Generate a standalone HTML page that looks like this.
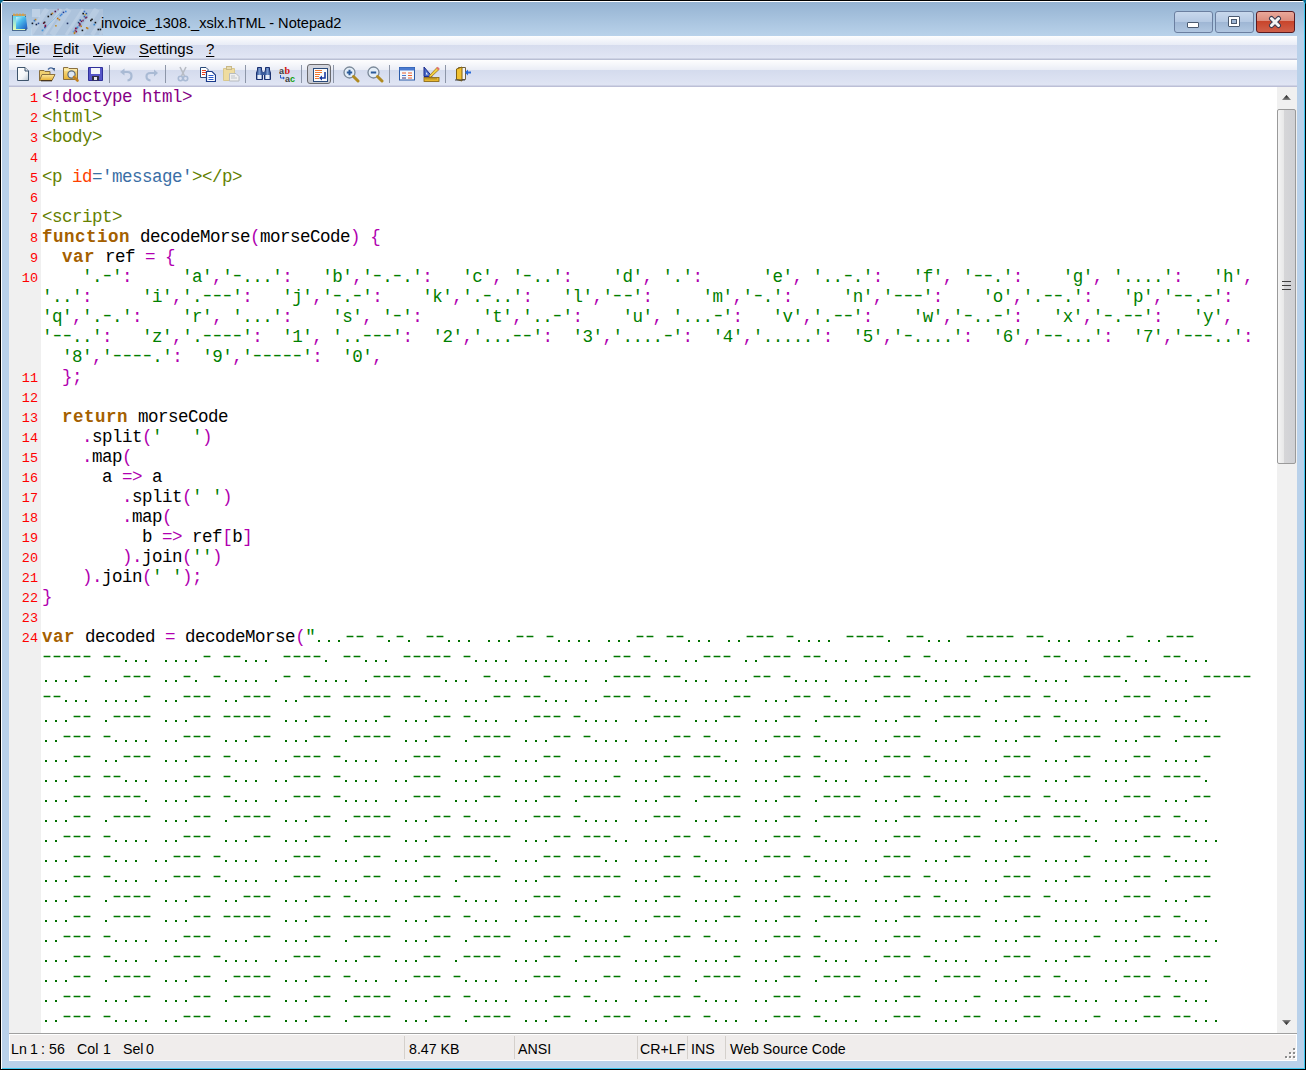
<!DOCTYPE html>
<html><head><meta charset="utf-8">
<style>
html,body{margin:0;padding:0;width:1306px;height:1070px;overflow:hidden;background:#000;}
*{box-sizing:border-box;}
.abs{position:absolute;}
#win{position:absolute;left:0;top:0;width:1306px;height:1070px;background:#000;}
#hl{position:absolute;left:1px;top:1px;width:1304px;height:1068px;background:#fff;}
#hl2{position:absolute;left:2px;top:2px;width:1303px;height:1067px;background:#3ec6ee;}
#frame{position:absolute;left:2px;top:2px;width:1302px;height:1066px;background:#b9d1ea;}
#title{position:absolute;left:2px;top:2px;width:1302px;height:34px;background:linear-gradient(#95b3d2,#b9d2ea);}
#ttext{position:absolute;left:101px;top:15px;font:14.6px "Liberation Sans",sans-serif;color:#000;white-space:nowrap;}
#menu{position:absolute;left:9px;top:36px;width:1288px;height:24px;background:linear-gradient(#fdfdfe 0,#e8ecf6 9px,#d6dcee 9px,#e1e6f4 22px,#b9bfd4 23px,#b9bfd4 24px);}
.mi{position:absolute;top:40px;font:15px "Liberation Sans",sans-serif;color:#000;white-space:nowrap;}
.mi u{text-decoration:underline;text-decoration-thickness:1px;text-underline-offset:1.5px;}
#tool{position:absolute;left:9px;top:60px;width:1288px;height:27px;background:linear-gradient(#fefefe 0,#eaedf6 10px,#d4dbed 10px,#e0e5f4 25px,#bcbfd6 26px,#bcbfd6 27px);}
.sep{position:absolute;top:65px;width:1px;height:18px;background:#8d96a8;}
#edit{position:absolute;left:9px;top:87px;width:1268px;height:946px;background:#fff;overflow:hidden;}
#margin{position:absolute;left:0;top:0;width:32px;height:946px;background:#f0f0f0;}
.r{position:absolute;left:33px;margin-top:0px;height:20px;line-height:20px;letter-spacing:-0.5px;font:17.5px "Liberation Mono",monospace;white-space:pre;color:#000;}
.h{display:inline-block;transform:translateY(-1px) scaleX(1.35);}
.n{position:absolute;left:0;margin-top:4px;width:29px;text-align:right;height:20px;line-height:20px;font:13.5px "Liberation Mono",monospace;color:#f00;}
#vs{position:absolute;left:1277px;top:87px;width:20px;height:946px;background:#f0f0f0;}
#status{position:absolute;left:9px;top:1033px;width:1288px;height:28px;background:#f0edec;border-top:1px solid #a0a0a0;}
.st{position:absolute;top:1041px;font:14.2px "Liberation Sans",sans-serif;color:#000;white-space:nowrap;}
.ss{position:absolute;top:1036px;width:1px;height:23px;background:#d4d0cc;}
</style></head><body>
<div id="win"></div>
<div id="hl"></div>
<div id="hl2"></div>
<div id="frame"></div>
<div id="title"></div>
<div class="abs" style="left:0;top:0;width:4px;height:4px;background:#0b6b8e;clip-path:polygon(0 0,100% 0,0 100%);"></div>
<div class="abs" style="left:1302px;top:0;width:4px;height:4px;background:#0b6b8e;clip-path:polygon(0 0,100% 0,100% 100%);"></div>
<!-- notepad icon -->
<svg class="abs" style="left:11px;top:12px" width="18" height="21" viewBox="0 0 18 21">
<defs><linearGradient id="gnp" x1="0" y1="0" x2="1" y2="1"><stop offset="0" stop-color="#c8f4ff"/><stop offset=".35" stop-color="#50c0ec"/><stop offset=".8" stop-color="#2a78d0"/><stop offset="1" stop-color="#3050a0"/></linearGradient>
<linearGradient id="gnp2" x1="0" y1="0" x2="0" y2="1"><stop offset="0" stop-color="#60d0f0"/><stop offset="1" stop-color="#e8ffb0"/></linearGradient></defs>
<path d="M2 3 H14 L16 17 L15 19 H2 Z" fill="#304870" opacity=".85"/>
<rect x="1.5" y="3.5" width="13" height="15" fill="url(#gnp2)" stroke="#4a6a90" stroke-width="1"/>
<path d="M5 5 H15 L16.5 17 H5 Z" fill="url(#gnp)"/>
<path d="M2 2 H15 V4 H2 Z" fill="#b0a080"/>
<path d="M3 1.5 V4 M6 1.5 V4 M9 1.5 V4 M12 1.5 V4" stroke="#e8a030" stroke-width="1.2"/>
</svg>
<svg class="abs" style="left:31px;top:8px" width="72" height="28" viewBox="31 8 72 28">
<rect x="32" y="9" width="71" height="26" fill="#adc3dc"/>
<rect x="32" y="9" width="8" height="8" fill="#c2d4e8" opacity=".8"/>
<path d="M30 35 L47 9" stroke="#d4e2f0" stroke-width="5" opacity="0.35"/>
<path d="M44 35 L61 9" stroke="#d4e2f0" stroke-width="3" opacity="0.4"/>
<path d="M52 35 L69 9" stroke="#d4e2f0" stroke-width="6" opacity="0.3"/>
<path d="M66 35 L83 9" stroke="#d4e2f0" stroke-width="3" opacity="0.35"/>
<path d="M80 35 L97 9" stroke="#d4e2f0" stroke-width="6" opacity="0.3"/>
<path d="M92 35 L109 9" stroke="#d4e2f0" stroke-width="4" opacity="0.35"/>
<path d="M100 35 L117 9" stroke="#d4e2f0" stroke-width="3" opacity="0.3"/>
<rect x="31.6" y="22.6" width="1.6" height="1.6" fill="#101828"/>
<rect x="33.7" y="19.8" width="1.6" height="1.6" fill="#2a70c8"/>
<rect x="34.7" y="18.8" width="1.6" height="1.6" fill="#c08020"/>
<rect x="35.6" y="23.7" width="1.6" height="1.6" fill="#102048"/>
<rect x="37.7" y="22.6" width="1.6" height="1.6" fill="#2a50a0"/>
<rect x="42.9" y="22.4" width="1.6" height="1.6" fill="#601030"/>
<rect x="43.8" y="21.5" width="1.6" height="1.6" fill="#302020"/>
<rect x="44.6" y="24.7" width="1.6" height="1.6" fill="#801040"/>
<rect x="44.1" y="26.7" width="1.6" height="1.6" fill="#2a60b0"/>
<rect x="44.6" y="25.8" width="1.6" height="1.6" fill="#801040"/>
<rect x="41.7" y="29.6" width="1.6" height="1.6" fill="#2a80d0"/>
<rect x="47.5" y="15.7" width="1.6" height="1.6" fill="#101010"/>
<rect x="50.5" y="13.6" width="1.6" height="1.6" fill="#202020"/>
<rect x="51.6" y="12.6" width="1.6" height="1.6" fill="#c08020"/>
<rect x="54.5" y="10.7" width="1.6" height="1.6" fill="#501050"/>
<rect x="57.4" y="8.7" width="1.6" height="1.6" fill="#a080a0"/>
<rect x="56.9" y="17.7" width="1.6" height="1.6" fill="#c07010"/>
<rect x="58.6" y="18.9" width="1.6" height="1.6" fill="#c08020"/>
<rect x="55.1" y="25.0" width="1.6" height="1.6" fill="#c09030"/>
<rect x="62.7" y="11.6" width="1.6" height="1.6" fill="#203890"/>
<rect x="65.0" y="10.7" width="1.6" height="1.6" fill="#3a80d8"/>
<rect x="60.9" y="13.6" width="1.6" height="1.6" fill="#3a80d8"/>
<rect x="59.7" y="14.7" width="1.6" height="1.6" fill="#3a80d8"/>
<rect x="66.7" y="22.6" width="1.6" height="1.6" fill="#203060"/>
<rect x="82.4" y="12.8" width="1.6" height="1.6" fill="#101010"/>
<rect x="85.6" y="12.8" width="1.6" height="1.6" fill="#2050a0"/>
<rect x="83.6" y="10.7" width="1.6" height="1.6" fill="#3a70c8"/>
<rect x="84.5" y="13.9" width="1.6" height="1.6" fill="#c0a040"/>
<rect x="83.6" y="15.7" width="1.6" height="1.6" fill="#2a60b0"/>
<rect x="84.8" y="17.1" width="1.6" height="1.6" fill="#701040"/>
<rect x="85.7" y="16.5" width="1.6" height="1.6" fill="#701040"/>
<rect x="82.4" y="19.7" width="1.6" height="1.6" fill="#801040"/>
<rect x="79.5" y="19.4" width="1.6" height="1.6" fill="#2050a0"/>
<rect x="80.7" y="20.6" width="1.6" height="1.6" fill="#701040"/>
<rect x="77.8" y="21.8" width="1.6" height="1.6" fill="#204070"/>
<rect x="78.9" y="22.9" width="1.6" height="1.6" fill="#701040"/>
<rect x="79.5" y="23.8" width="1.6" height="1.6" fill="#801040"/>
<rect x="78.7" y="24.7" width="1.6" height="1.6" fill="#701040"/>
<rect x="80.4" y="25.5" width="1.6" height="1.6" fill="#c08020"/>
<rect x="74.9" y="27.6" width="1.6" height="1.6" fill="#801040"/>
<rect x="75.8" y="27.6" width="1.6" height="1.6" fill="#801040"/>
<rect x="74.6" y="29.6" width="1.6" height="1.6" fill="#801040"/>
<rect x="75.5" y="30.8" width="1.6" height="1.6" fill="#801040"/>
<rect x="73.7" y="31.4" width="1.6" height="1.6" fill="#c08020"/>
<rect x="73.7" y="32.5" width="1.6" height="1.6" fill="#c08020"/>
<rect x="81.6" y="29.6" width="1.6" height="1.6" fill="#101010"/>
<rect x="90.0" y="19.7" width="1.6" height="1.6" fill="#101010"/>
<rect x="91.2" y="18.6" width="1.6" height="1.6" fill="#101010"/>
<rect x="94.6" y="21.8" width="1.6" height="1.6" fill="#101010"/>
<rect x="93.5" y="23.8" width="1.6" height="1.6" fill="#2a80d0"/>
<rect x="85.9" y="27.0" width="1.6" height="1.6" fill="#c08020"/>
<rect x="86.8" y="27.6" width="1.6" height="1.6" fill="#c08020"/>
<rect x="97.5" y="28.7" width="1.6" height="1.6" fill="#101010"/>
<rect x="99.6" y="28.7" width="1.6" height="1.6" fill="#101010"/>
<rect x="76.7" y="26.6" width="1.6" height="1.6" fill="#2a80d0"/>
<rect x="72.7" y="30.7" width="1.6" height="1.6" fill="#60a0e0"/>
<path d="M42 31 L60 13" stroke="#60b0e8" stroke-width=".7" opacity=".6"/>
<path d="M75 31 L88 15" stroke="#60b0e8" stroke-width=".7" opacity=".6"/>
</svg>
<div id="ttext">invoice_1308._xslx.hTML - Notepad2</div>
<!-- caption buttons -->
<div class="abs" style="left:1174px;top:11px;width:39px;height:22px;border:1px solid #6b7fa0;border-radius:3px;background:linear-gradient(#c8d8ec 0,#b4c8e2 50%,#9eb6d4 50%,#b0c6e0 100%);"></div>
<div class="abs" style="left:1187px;top:22px;width:12px;height:6px;background:#fff;border:1px solid #4a5a70;border-radius:1px;"></div>
<div class="abs" style="left:1215px;top:11px;width:39px;height:22px;border:1px solid #6b7fa0;border-radius:3px;background:linear-gradient(#c8d8ec 0,#b4c8e2 50%,#9eb6d4 50%,#b0c6e0 100%);"></div>
<div class="abs" style="left:1228px;top:16px;width:12px;height:11px;background:#fff;border:1px solid #4a5a70;border-radius:1px;"></div>
<div class="abs" style="left:1231px;top:19px;width:6px;height:5px;background:#9eb6d4;border:1px solid #4a5a70;"></div>
<div class="abs" style="left:1256px;top:11px;width:39px;height:22px;border:1px solid #5a1a20;border-radius:3px;background:linear-gradient(#eaa89a 0,#dc8c7c 45%,#c8442a 45%,#d0604a 100%);"></div>
<svg class="abs" style="left:1267px;top:15px" width="16" height="14" viewBox="0 0 16 14"><path d="M4.5 3.5 L11.5 10.5 M11.5 3.5 L4.5 10.5" stroke="#3a3a50" stroke-width="5" stroke-linecap="round"/><path d="M4.5 3.5 L11.5 10.5 M11.5 3.5 L4.5 10.5" stroke="#f4f4f4" stroke-width="3" stroke-linecap="round"/></svg>

<div id="menu"></div>
<div class="mi" style="left:16px"><u>F</u>ile</div>
<div class="mi" style="left:53px"><u>E</u>dit</div>
<div class="mi" style="left:93px"><u>V</u>iew</div>
<div class="mi" style="left:139px"><u>S</u>ettings</div>
<div class="mi" style="left:206px"><u>?</u></div>

<div id="tool"></div>
<div class="sep" style="left:109px"></div>
<div class="sep" style="left:165px"></div>
<div class="sep" style="left:245px"></div>
<div class="sep" style="left:301px"></div>
<div class="sep" style="left:333px"></div>
<div class="sep" style="left:389px"></div>
<div class="sep" style="left:445px"></div>
<!-- new -->
<svg class="abs" style="left:15px;top:66px" width="16" height="16" viewBox="0 0 16 16">
<defs><linearGradient id="gpage" x1="0" y1="0" x2="1" y2="1"><stop offset="0" stop-color="#fff"/><stop offset=".6" stop-color="#f4f6f8"/><stop offset="1" stop-color="#b8c4d0"/></linearGradient></defs>
<path d="M2.5 1.5 H10 L13.5 5 V14.5 H2.5 Z" fill="url(#gpage)" stroke="#3e546c" stroke-width="1"/>
<path d="M10 1.5 V5 H13.5" fill="#dfe6ee" stroke="#3e546c" stroke-width="1"/>
</svg>
<!-- open -->
<svg class="abs" style="left:39px;top:66px" width="17" height="16" viewBox="0 0 17 16">
<defs><linearGradient id="gfold" x1="0" y1="0" x2="0" y2="1"><stop offset="0" stop-color="#fde9a0"/><stop offset="1" stop-color="#e8b030"/></linearGradient></defs>
<path d="M0.5 4.5 H5 L6 5.5 H11 V14.5 H0.5 Z" fill="#f0d070" stroke="#8a7040" stroke-width="1"/>
<path d="M3 8.5 H16 L13 14.5 H0.5 Z" fill="url(#gfold)" stroke="#8a7040" stroke-width="1"/>
<path d="M2 14.8 H13" stroke="#302010" stroke-width="1"/>
<path d="M9 3.5 Q11.5 0.5 14.5 3" fill="none" stroke="#4a6a9a" stroke-width="1.3"/>
<path d="M13 2 L16 2 L15.5 5.5 Z" fill="#3a5a8a"/>
</svg>
<!-- browse -->
<svg class="abs" style="left:63px;top:66px" width="17" height="17" viewBox="0 0 17 17">
<path d="M0.5 1.5 H5 L6 2.5 H14.5 V13.5 H0.5 Z" fill="url(#gfold)" stroke="#8a7040" stroke-width="1"/>
<path d="M1 4 H14" stroke="#fff4c0" stroke-width="1"/>
<circle cx="8.5" cy="8.5" r="3.6" fill="#dde8f4" stroke="#5a6a7a" stroke-width="1.2"/>
<path d="M11 11 L14.5 14.5" stroke="#c08020" stroke-width="2.6" stroke-linecap="round"/>
</svg>
<!-- save -->
<svg class="abs" style="left:88px;top:66px" width="15" height="16" viewBox="0 0 15 16">
<path d="M0.5 1.5 H14.5 V14.5 H0.5 Z" fill="#5656c8" stroke="#30309a" stroke-width="1"/>
<rect x="3" y="2" width="9" height="6" fill="#f4f6fa"/>
<rect x="4" y="10" width="7" height="4.5" fill="#303040"/>
<rect x="6" y="11" width="3" height="3" fill="#e8e8f0"/>
</svg>
<!-- undo (disabled) -->
<svg class="abs" style="left:119px;top:68px" width="15" height="14" viewBox="0 0 15 14">
<path d="M4 4 H8.5 Q12.5 4 12.5 8 Q12.5 12 8.5 12.5" fill="none" stroke="#a9bad4" stroke-width="2.2"/>
<path d="M1 4 L5.5 0.5 V7.5 Z" fill="#a9bad4"/>
</svg>
<!-- redo (disabled) -->
<svg class="abs" style="left:144px;top:68px" width="15" height="14" viewBox="0 0 15 14">
<path d="M11 5 H6.5 Q2.5 5 2.5 8.5 Q2.5 12 6.5 12.5" fill="none" stroke="#a9bad4" stroke-width="2.2"/>
<path d="M14 5 L10 1.5 V8.5 Z" fill="#a9bad4"/>
</svg>
<!-- cut (disabled) -->
<svg class="abs" style="left:176px;top:66px" width="14" height="16" viewBox="0 0 14 16">
<path d="M4 1 L8.5 10 M10 1 L5.5 10" stroke="#b8bcc4" stroke-width="1.6"/>
<circle cx="4.5" cy="12.5" r="2.2" fill="none" stroke="#a9bad4" stroke-width="1.6"/>
<circle cx="9.5" cy="12.5" r="2.2" fill="none" stroke="#a9bad4" stroke-width="1.6"/>
</svg>
<!-- copy -->
<svg class="abs" style="left:200px;top:67px" width="16" height="15" viewBox="0 0 16 15">
<path d="M0.5 0.5 H6 L8 2.5 V10.5 H0.5 Z" fill="#fff" stroke="#2a4a7a" stroke-width="1"/>
<path d="M2 3.5 H6 M2 5.5 H6 M2 7.5 H5" stroke="#e84020" stroke-width="1"/>
<path d="M6.5 4.5 H12 L15.5 8 V14.5 H6.5 Z" fill="#fff" stroke="#1a3a8a" stroke-width="1.2"/>
<path d="M8.5 8.5 H13.5 M8.5 10.5 H13.5 M8.5 12.5 H13.5" stroke="#2a5ac8" stroke-width="1"/>
</svg>
<!-- paste (disabled) -->
<svg class="abs" style="left:223px;top:66px" width="17" height="16" viewBox="0 0 17 16">
<path d="M0.5 2.5 H11.5 V14.5 H0.5 Z" fill="#efdca0" stroke="#d8c890" stroke-width="1"/>
<rect x="3.5" y="0.5" width="5" height="3" fill="#e8dcb0" stroke="#c8b888" stroke-width="1"/>
<path d="M6.5 7.5 H13 L16 10.5 V15 H6.5 Z" fill="#f0f0f0" stroke="#b8bcc0" stroke-width="1"/>
<path d="M8 10 H12 M8 12 H14" stroke="#c0c4c8" stroke-width="1"/>
</svg>
<!-- find -->
<svg class="abs" style="left:256px;top:66px" width="16" height="15" viewBox="0 0 16 15">
<defs><linearGradient id="gbin" x1="0" y1="0" x2="1" y2="0"><stop offset="0" stop-color="#2a4a8a"/><stop offset=".5" stop-color="#7a9ad0"/><stop offset="1" stop-color="#2a4a8a"/></linearGradient></defs>
<path d="M1.5 1.5 H5.5 V4 L6.5 7 V13.5 H0.5 V7 L1.5 4 Z" fill="url(#gbin)" stroke="#1a3070" stroke-width="1"/>
<path d="M9.5 1.5 H13.5 V4 L14.5 7 V13.5 H8.5 V7 L9.5 4 Z" fill="url(#gbin)" stroke="#1a3070" stroke-width="1"/>
<rect x="5.5" y="6" width="4" height="3" fill="#3a5a9a"/>
<rect x="1.5" y="9" width="4" height="4" fill="#e8eef8"/>
<rect x="9.5" y="9" width="4" height="4" fill="#e8eef8"/>
</svg>
<!-- replace -->
<svg class="abs" style="left:279px;top:66px" width="17" height="16" viewBox="0 0 17 16">
<text x="0" y="7.5" font-family="Liberation Sans" font-weight="bold" font-size="9" fill="#404040">a</text>
<text x="5.5" y="7.5" font-family="Liberation Serif" font-weight="bold" font-size="10" fill="#d01010">b</text>
<path d="M1.5 9 V12 H4.5" fill="none" stroke="#2a5ac8" stroke-width="1"/>
<path d="M4 10.5 L6 12 L4 13.5 Z" fill="#2a5ac8"/>
<text x="6" y="15.5" font-family="Liberation Sans" font-weight="bold" font-size="9" fill="#404040">a</text>
<text x="11" y="15.5" font-family="Liberation Sans" font-weight="bold" font-size="9" fill="#10a010">c</text>
</svg>
<!-- word wrap pressed -->
<div class="abs" style="left:307px;top:64px;width:24px;height:20px;border:1.5px solid #6a6a6e;border-radius:3px;background:linear-gradient(#d4d6de,#c6c9d2);"></div>
<svg class="abs" style="left:313px;top:68px" width="15" height="14" viewBox="0 0 15 14">
<rect x="0.5" y="0.5" width="14" height="13" fill="#fbfbfc" stroke="#2a4a7a" stroke-width="1"/>
<path d="M2 2.5 H9 M2 4.5 H9 M2 6.5 H7 M2 8.5 H6 M2 10.5 H6" stroke="#f07830" stroke-width="1"/>
<path d="M12 4 V10 H8" fill="none" stroke="#1a3aa0" stroke-width="1.6"/>
<path d="M9 7.5 L6 10 L9 12.5 Z" fill="#1a3aa0"/>
</svg>
<!-- zoom in -->
<svg class="abs" style="left:343px;top:66px" width="17" height="17" viewBox="0 0 17 17">
<circle cx="6.5" cy="6.5" r="5.5" fill="#e4eef8" stroke="#7a8898" stroke-width="1.3"/>
<path d="M3.8 6.5 H9.2 M6.5 3.8 V9.2" stroke="#2a5a9a" stroke-width="2"/>
<path d="M10.5 10.5 L15 15" stroke="#b08a20" stroke-width="3" stroke-linecap="round"/>
</svg>
<!-- zoom out -->
<svg class="abs" style="left:367px;top:66px" width="17" height="17" viewBox="0 0 17 17">
<circle cx="6.5" cy="6.5" r="5.5" fill="#e4eef8" stroke="#7a8898" stroke-width="1.3"/>
<path d="M3.8 6.5 H9.2" stroke="#2a5a9a" stroke-width="2"/>
<path d="M10.5 10.5 L15 15" stroke="#b08a20" stroke-width="3" stroke-linecap="round"/>
</svg>
<!-- scheme -->
<svg class="abs" style="left:399px;top:67px" width="16" height="14" viewBox="0 0 16 14">
<rect x="0.5" y="0.5" width="15" height="12.5" fill="#f4f8fc" stroke="#2a5aa8" stroke-width="1"/>
<rect x="0.5" y="0.5" width="15" height="3" fill="#4a7ad0"/>
<path d="M3 6 H7 M9 6 H13 M3 8.5 H7 M9 8.5 H13 M3 11 H7 M9 11 H13" stroke="#e86030" stroke-width="1"/>
<path d="M3 8.5 H7 M3 11 H7" stroke="#4a7ad0" stroke-width="1"/>
</svg>
<!-- customize -->
<svg class="abs" style="left:423px;top:66px" width="17" height="16" viewBox="0 0 17 16">
<path d="M1 1 L9 10.5 H1 Z" fill="#4a6ac8" stroke="#1a2a8a" stroke-width="1"/>
<path d="M3 6 L5 8.5 H3 Z" fill="#e8eefc"/>
<path d="M14 1.5 L16 3.5 L8 11 L6 11.5 L6.5 9.5 Z" fill="#f0d040" stroke="#a07020" stroke-width="0.8"/>
<path d="M14 1.5 L16 3.5" stroke="#e07070" stroke-width="2"/>
<rect x="1" y="11.5" width="15" height="4" fill="#e8b830" stroke="#806010" stroke-width="0.8"/>
<path d="M3 12 V13.5 M5 12 V13.5 M7 12 V13.5 M9 12 V13.5 M11 12 V13.5 M13 12 V13.5" stroke="#806010" stroke-width="0.8"/>
</svg>
<!-- exit -->
<svg class="abs" style="left:455px;top:66px" width="17" height="16" viewBox="0 0 17 16">
<path d="M3.5 1.5 H10.5 V13.5 H3.5 Z" fill="#f4f4f4" stroke="#706040" stroke-width="1"/>
<path d="M1.5 3 L7 1 V15 L1.5 13.5 Z" fill="#f0c030" stroke="#806010" stroke-width="1"/>
<path d="M0 14 H10" stroke="#404040" stroke-width="1"/>
<path d="M11 6.5 H16" stroke="#2a6ad8" stroke-width="2"/>
<path d="M10 6.5 L13 3.5 V9.5 Z" fill="#2a6ad8"/>
</svg>


<div id="edit"><div id="margin"></div>
<div class="r" style="top:0px"><span style="color:#850085">&lt;!doctype html&gt;</span></div>
<div class="n" style="top:0px">1</div>
<div class="r" style="top:20px"><span style="color:#648000">&lt;html&gt;</span></div>
<div class="n" style="top:20px">2</div>
<div class="r" style="top:40px"><span style="color:#648000">&lt;body&gt;</span></div>
<div class="n" style="top:40px">3</div>
<div class="r" style="top:60px"></div>
<div class="n" style="top:60px">4</div>
<div class="r" style="top:80px"><span style="color:#648000">&lt;p</span> <span style="color:#ff4000">id</span><span style="color:#3a6ea5">=</span><span style="color:#3a6ea5">'message'</span><span style="color:#648000">&gt;&lt;/p&gt;</span></div>
<div class="n" style="top:80px">5</div>
<div class="r" style="top:100px"></div>
<div class="n" style="top:100px">6</div>
<div class="r" style="top:120px"><span style="color:#648000">&lt;script&gt;</span></div>
<div class="n" style="top:120px">7</div>
<div class="r" style="top:140px"><span style="color:#a46000;font-weight:bold;letter-spacing:0.5px">function</span> <span style="color:#000000">decodeMorse</span><span style="color:#b000b0">(</span><span style="color:#000000">morseCode</span><span style="color:#b000b0">)</span> <span style="color:#b000b0">{</span></div>
<div class="n" style="top:140px">8</div>
<div class="r" style="top:160px">  <span style="color:#a46000;font-weight:bold;letter-spacing:0.5px">var</span> <span style="color:#000000">ref</span> <span style="color:#b000b0">=</span> <span style="color:#b000b0">{</span></div>
<div class="n" style="top:160px">9</div>
<div class="r" style="top:180px">    <span style="color:#008000">'.<span class="h">-</span>'</span><span style="color:#b000b0">:</span>     <span style="color:#008000">'a'</span><span style="color:#b000b0">,</span><span style="color:#008000">'<span class="h">-</span>...'</span><span style="color:#b000b0">:</span>   <span style="color:#008000">'b'</span><span style="color:#b000b0">,</span><span style="color:#008000">'<span class="h">-</span>.<span class="h">-</span>.'</span><span style="color:#b000b0">:</span>   <span style="color:#008000">'c'</span><span style="color:#b000b0">,</span> <span style="color:#008000">'<span class="h">-</span>..'</span><span style="color:#b000b0">:</span>    <span style="color:#008000">'d'</span><span style="color:#b000b0">,</span> <span style="color:#008000">'.'</span><span style="color:#b000b0">:</span>      <span style="color:#008000">'e'</span><span style="color:#b000b0">,</span> <span style="color:#008000">'..<span class="h">-</span>.'</span><span style="color:#b000b0">:</span>   <span style="color:#008000">'f'</span><span style="color:#b000b0">,</span> <span style="color:#008000">'<span class="h">-</span><span class="h">-</span>.'</span><span style="color:#b000b0">:</span>    <span style="color:#008000">'g'</span><span style="color:#b000b0">,</span> <span style="color:#008000">'....'</span><span style="color:#b000b0">:</span>   <span style="color:#008000">'h'</span><span style="color:#b000b0">,</span></div>
<div class="n" style="top:180px">10</div>
<div class="r" style="top:200px"><span style="color:#008000">'..'</span><span style="color:#b000b0">:</span>     <span style="color:#008000">'i'</span><span style="color:#b000b0">,</span><span style="color:#008000">'.<span class="h">-</span><span class="h">-</span><span class="h">-</span>'</span><span style="color:#b000b0">:</span>   <span style="color:#008000">'j'</span><span style="color:#b000b0">,</span><span style="color:#008000">'<span class="h">-</span>.<span class="h">-</span>'</span><span style="color:#b000b0">:</span>    <span style="color:#008000">'k'</span><span style="color:#b000b0">,</span><span style="color:#008000">'.<span class="h">-</span>..'</span><span style="color:#b000b0">:</span>   <span style="color:#008000">'l'</span><span style="color:#b000b0">,</span><span style="color:#008000">'<span class="h">-</span><span class="h">-</span>'</span><span style="color:#b000b0">:</span>     <span style="color:#008000">'m'</span><span style="color:#b000b0">,</span><span style="color:#008000">'<span class="h">-</span>.'</span><span style="color:#b000b0">:</span>     <span style="color:#008000">'n'</span><span style="color:#b000b0">,</span><span style="color:#008000">'<span class="h">-</span><span class="h">-</span><span class="h">-</span>'</span><span style="color:#b000b0">:</span>    <span style="color:#008000">'o'</span><span style="color:#b000b0">,</span><span style="color:#008000">'.<span class="h">-</span><span class="h">-</span>.'</span><span style="color:#b000b0">:</span>   <span style="color:#008000">'p'</span><span style="color:#b000b0">,</span><span style="color:#008000">'<span class="h">-</span><span class="h">-</span>.<span class="h">-</span>'</span><span style="color:#b000b0">:</span>   </div>
<div class="r" style="top:220px"><span style="color:#008000">'q'</span><span style="color:#b000b0">,</span><span style="color:#008000">'.<span class="h">-</span>.'</span><span style="color:#b000b0">:</span>    <span style="color:#008000">'r'</span><span style="color:#b000b0">,</span> <span style="color:#008000">'...'</span><span style="color:#b000b0">:</span>    <span style="color:#008000">'s'</span><span style="color:#b000b0">,</span> <span style="color:#008000">'<span class="h">-</span>'</span><span style="color:#b000b0">:</span>      <span style="color:#008000">'t'</span><span style="color:#b000b0">,</span><span style="color:#008000">'..<span class="h">-</span>'</span><span style="color:#b000b0">:</span>    <span style="color:#008000">'u'</span><span style="color:#b000b0">,</span> <span style="color:#008000">'...<span class="h">-</span>'</span><span style="color:#b000b0">:</span>   <span style="color:#008000">'v'</span><span style="color:#b000b0">,</span><span style="color:#008000">'.<span class="h">-</span><span class="h">-</span>'</span><span style="color:#b000b0">:</span>    <span style="color:#008000">'w'</span><span style="color:#b000b0">,</span><span style="color:#008000">'<span class="h">-</span>..<span class="h">-</span>'</span><span style="color:#b000b0">:</span>   <span style="color:#008000">'x'</span><span style="color:#b000b0">,</span><span style="color:#008000">'<span class="h">-</span>.<span class="h">-</span><span class="h">-</span>'</span><span style="color:#b000b0">:</span>   <span style="color:#008000">'y'</span><span style="color:#b000b0">,</span></div>
<div class="r" style="top:240px"><span style="color:#008000">'<span class="h">-</span><span class="h">-</span>..'</span><span style="color:#b000b0">:</span>   <span style="color:#008000">'z'</span><span style="color:#b000b0">,</span><span style="color:#008000">'.<span class="h">-</span><span class="h">-</span><span class="h">-</span><span class="h">-</span>'</span><span style="color:#b000b0">:</span>  <span style="color:#008000">'1'</span><span style="color:#b000b0">,</span> <span style="color:#008000">'..<span class="h">-</span><span class="h">-</span><span class="h">-</span>'</span><span style="color:#b000b0">:</span>  <span style="color:#008000">'2'</span><span style="color:#b000b0">,</span><span style="color:#008000">'...<span class="h">-</span><span class="h">-</span>'</span><span style="color:#b000b0">:</span>  <span style="color:#008000">'3'</span><span style="color:#b000b0">,</span><span style="color:#008000">'....<span class="h">-</span>'</span><span style="color:#b000b0">:</span>  <span style="color:#008000">'4'</span><span style="color:#b000b0">,</span><span style="color:#008000">'.....'</span><span style="color:#b000b0">:</span>  <span style="color:#008000">'5'</span><span style="color:#b000b0">,</span><span style="color:#008000">'<span class="h">-</span>....'</span><span style="color:#b000b0">:</span>  <span style="color:#008000">'6'</span><span style="color:#b000b0">,</span><span style="color:#008000">'<span class="h">-</span><span class="h">-</span>...'</span><span style="color:#b000b0">:</span>  <span style="color:#008000">'7'</span><span style="color:#b000b0">,</span><span style="color:#008000">'<span class="h">-</span><span class="h">-</span><span class="h">-</span>..'</span><span style="color:#b000b0">:</span></div>
<div class="r" style="top:260px">  <span style="color:#008000">'8'</span><span style="color:#b000b0">,</span><span style="color:#008000">'<span class="h">-</span><span class="h">-</span><span class="h">-</span><span class="h">-</span>.'</span><span style="color:#b000b0">:</span>  <span style="color:#008000">'9'</span><span style="color:#b000b0">,</span><span style="color:#008000">'<span class="h">-</span><span class="h">-</span><span class="h">-</span><span class="h">-</span><span class="h">-</span>'</span><span style="color:#b000b0">:</span>  <span style="color:#008000">'0'</span><span style="color:#b000b0">,</span></div>
<div class="r" style="top:280px">  <span style="color:#b000b0">}</span><span style="color:#b000b0">;</span></div>
<div class="n" style="top:280px">11</div>
<div class="r" style="top:300px"></div>
<div class="n" style="top:300px">12</div>
<div class="r" style="top:320px">  <span style="color:#a46000;font-weight:bold;letter-spacing:0.5px">return</span> <span style="color:#000000">morseCode</span></div>
<div class="n" style="top:320px">13</div>
<div class="r" style="top:340px">    <span style="color:#b000b0">.</span><span style="color:#000000">split</span><span style="color:#b000b0">(</span><span style="color:#008000">'   '</span><span style="color:#b000b0">)</span></div>
<div class="n" style="top:340px">14</div>
<div class="r" style="top:360px">    <span style="color:#b000b0">.</span><span style="color:#000000">map</span><span style="color:#b000b0">(</span></div>
<div class="n" style="top:360px">15</div>
<div class="r" style="top:380px">      <span style="color:#000000">a</span> <span style="color:#b000b0">=</span><span style="color:#b000b0">&gt;</span> <span style="color:#000000">a</span></div>
<div class="n" style="top:380px">16</div>
<div class="r" style="top:400px">        <span style="color:#b000b0">.</span><span style="color:#000000">split</span><span style="color:#b000b0">(</span><span style="color:#008000">' '</span><span style="color:#b000b0">)</span></div>
<div class="n" style="top:400px">17</div>
<div class="r" style="top:420px">        <span style="color:#b000b0">.</span><span style="color:#000000">map</span><span style="color:#b000b0">(</span></div>
<div class="n" style="top:420px">18</div>
<div class="r" style="top:440px">          <span style="color:#000000">b</span> <span style="color:#b000b0">=</span><span style="color:#b000b0">&gt;</span> <span style="color:#000000">ref</span><span style="color:#b000b0">[</span><span style="color:#000000">b</span><span style="color:#b000b0">]</span></div>
<div class="n" style="top:440px">19</div>
<div class="r" style="top:460px">        <span style="color:#b000b0">)</span><span style="color:#b000b0">.</span><span style="color:#000000">join</span><span style="color:#b000b0">(</span><span style="color:#008000">''</span><span style="color:#b000b0">)</span></div>
<div class="n" style="top:460px">20</div>
<div class="r" style="top:480px">    <span style="color:#b000b0">)</span><span style="color:#b000b0">.</span><span style="color:#000000">join</span><span style="color:#b000b0">(</span><span style="color:#008000">' '</span><span style="color:#b000b0">)</span><span style="color:#b000b0">;</span></div>
<div class="n" style="top:480px">21</div>
<div class="r" style="top:500px"><span style="color:#b000b0">}</span></div>
<div class="n" style="top:500px">22</div>
<div class="r" style="top:520px"></div>
<div class="n" style="top:520px">23</div>
<div class="r" style="top:540px"><span style="color:#a46000;font-weight:bold;letter-spacing:0.5px">var</span> <span style="color:#000000">decoded</span> <span style="color:#b000b0">=</span> <span style="color:#000000">decodeMorse</span><span style="color:#b000b0">(</span><span style="color:#008000">"</span></div>
<div class="n" style="top:540px">24</div>
<div class="r" style="top:560px"></div>
<div class="r" style="top:580px"></div>
<div class="r" style="top:600px"></div>
<div class="r" style="top:620px"></div>
<div class="r" style="top:640px"></div>
<div class="r" style="top:660px"></div>
<div class="r" style="top:680px"></div>
<div class="r" style="top:700px"></div>
<div class="r" style="top:720px"></div>
<div class="r" style="top:740px"></div>
<div class="r" style="top:760px"></div>
<div class="r" style="top:780px"></div>
<div class="r" style="top:800px"></div>
<div class="r" style="top:820px"></div>
<div class="r" style="top:840px"></div>
<div class="r" style="top:860px"></div>
<div class="r" style="top:880px"></div>
<div class="r" style="top:900px"></div>
<div class="r" style="top:920px"></div><svg style="position:absolute;left:0;top:0" width="1268" height="946"><path d="M337.6 549.5h6.8M347.6 549.5h6.8M367.6 549.5h6.8M387.6 549.5h6.8M417.6 549.5h6.8M427.6 549.5h6.8M507.6 549.5h6.8M517.6 549.5h6.8M537.6 549.5h6.8M627.6 549.5h6.8M637.6 549.5h6.8M657.6 549.5h6.8M667.6 549.5h6.8M737.6 549.5h6.8M747.6 549.5h6.8M757.6 549.5h6.8M777.6 549.5h6.8M837.6 549.5h6.8M847.6 549.5h6.8M857.6 549.5h6.8M867.6 549.5h6.8M897.6 549.5h6.8M907.6 549.5h6.8M957.6 549.5h6.8M967.6 549.5h6.8M977.6 549.5h6.8M987.6 549.5h6.8M997.6 549.5h6.8M1017.6 549.5h6.8M1027.6 549.5h6.8M1117.6 549.5h6.8M1157.6 549.5h6.8M1167.6 549.5h6.8M1177.6 549.5h6.8M34.6 569.5h6.8M44.6 569.5h6.8M54.6 569.5h6.8M64.6 569.5h6.8M74.6 569.5h6.8M94.6 569.5h6.8M104.6 569.5h6.8M194.6 569.5h6.8M214.6 569.5h6.8M224.6 569.5h6.8M274.6 569.5h6.8M284.6 569.5h6.8M294.6 569.5h6.8M304.6 569.5h6.8M334.6 569.5h6.8M344.6 569.5h6.8M394.6 569.5h6.8M404.6 569.5h6.8M414.6 569.5h6.8M424.6 569.5h6.8M434.6 569.5h6.8M454.6 569.5h6.8M604.6 569.5h6.8M614.6 569.5h6.8M634.6 569.5h6.8M694.6 569.5h6.8M704.6 569.5h6.8M714.6 569.5h6.8M754.6 569.5h6.8M764.6 569.5h6.8M774.6 569.5h6.8M794.6 569.5h6.8M804.6 569.5h6.8M894.6 569.5h6.8M914.6 569.5h6.8M1034.6 569.5h6.8M1044.6 569.5h6.8M1094.6 569.5h6.8M1104.6 569.5h6.8M1114.6 569.5h6.8M1154.6 569.5h6.8M1164.6 569.5h6.8M74.6 589.5h6.8M114.6 589.5h6.8M124.6 589.5h6.8M134.6 589.5h6.8M174.6 589.5h6.8M204.6 589.5h6.8M274.6 589.5h6.8M294.6 589.5h6.8M364.6 589.5h6.8M374.6 589.5h6.8M384.6 589.5h6.8M394.6 589.5h6.8M414.6 589.5h6.8M424.6 589.5h6.8M474.6 589.5h6.8M534.6 589.5h6.8M604.6 589.5h6.8M614.6 589.5h6.8M624.6 589.5h6.8M634.6 589.5h6.8M654.6 589.5h6.8M664.6 589.5h6.8M744.6 589.5h6.8M754.6 589.5h6.8M774.6 589.5h6.8M864.6 589.5h6.8M874.6 589.5h6.8M894.6 589.5h6.8M904.6 589.5h6.8M974.6 589.5h6.8M984.6 589.5h6.8M994.6 589.5h6.8M1014.6 589.5h6.8M1074.6 589.5h6.8M1084.6 589.5h6.8M1094.6 589.5h6.8M1104.6 589.5h6.8M1134.6 589.5h6.8M1144.6 589.5h6.8M1194.6 589.5h6.8M1204.6 589.5h6.8M1214.6 589.5h6.8M1224.6 589.5h6.8M1234.6 589.5h6.8M34.6 609.5h6.8M44.6 609.5h6.8M134.6 609.5h6.8M174.6 609.5h6.8M184.6 609.5h6.8M194.6 609.5h6.8M234.6 609.5h6.8M244.6 609.5h6.8M254.6 609.5h6.8M294.6 609.5h6.8M304.6 609.5h6.8M314.6 609.5h6.8M334.6 609.5h6.8M344.6 609.5h6.8M354.6 609.5h6.8M364.6 609.5h6.8M374.6 609.5h6.8M394.6 609.5h6.8M404.6 609.5h6.8M484.6 609.5h6.8M494.6 609.5h6.8M514.6 609.5h6.8M524.6 609.5h6.8M594.6 609.5h6.8M604.6 609.5h6.8M614.6 609.5h6.8M634.6 609.5h6.8M724.6 609.5h6.8M734.6 609.5h6.8M784.6 609.5h6.8M794.6 609.5h6.8M814.6 609.5h6.8M874.6 609.5h6.8M884.6 609.5h6.8M894.6 609.5h6.8M934.6 609.5h6.8M944.6 609.5h6.8M954.6 609.5h6.8M994.6 609.5h6.8M1004.6 609.5h6.8M1014.6 609.5h6.8M1034.6 609.5h6.8M1114.6 609.5h6.8M1124.6 609.5h6.8M1134.6 609.5h6.8M1184.6 609.5h6.8M1194.6 609.5h6.8M64.6 629.5h6.8M74.6 629.5h6.8M104.6 629.5h6.8M114.6 629.5h6.8M124.6 629.5h6.8M134.6 629.5h6.8M184.6 629.5h6.8M194.6 629.5h6.8M214.6 629.5h6.8M224.6 629.5h6.8M234.6 629.5h6.8M244.6 629.5h6.8M254.6 629.5h6.8M304.6 629.5h6.8M314.6 629.5h6.8M374.6 629.5h6.8M424.6 629.5h6.8M434.6 629.5h6.8M454.6 629.5h6.8M524.6 629.5h6.8M534.6 629.5h6.8M544.6 629.5h6.8M564.6 629.5h6.8M644.6 629.5h6.8M654.6 629.5h6.8M664.6 629.5h6.8M714.6 629.5h6.8M724.6 629.5h6.8M774.6 629.5h6.8M784.6 629.5h6.8M814.6 629.5h6.8M824.6 629.5h6.8M834.6 629.5h6.8M844.6 629.5h6.8M894.6 629.5h6.8M904.6 629.5h6.8M934.6 629.5h6.8M944.6 629.5h6.8M954.6 629.5h6.8M964.6 629.5h6.8M1014.6 629.5h6.8M1024.6 629.5h6.8M1044.6 629.5h6.8M1134.6 629.5h6.8M1144.6 629.5h6.8M1164.6 629.5h6.8M54.6 649.5h6.8M64.6 649.5h6.8M74.6 649.5h6.8M94.6 649.5h6.8M174.6 649.5h6.8M184.6 649.5h6.8M194.6 649.5h6.8M244.6 649.5h6.8M254.6 649.5h6.8M304.6 649.5h6.8M314.6 649.5h6.8M344.6 649.5h6.8M354.6 649.5h6.8M364.6 649.5h6.8M374.6 649.5h6.8M424.6 649.5h6.8M434.6 649.5h6.8M464.6 649.5h6.8M474.6 649.5h6.8M484.6 649.5h6.8M494.6 649.5h6.8M544.6 649.5h6.8M554.6 649.5h6.8M574.6 649.5h6.8M664.6 649.5h6.8M674.6 649.5h6.8M694.6 649.5h6.8M764.6 649.5h6.8M774.6 649.5h6.8M784.6 649.5h6.8M804.6 649.5h6.8M884.6 649.5h6.8M894.6 649.5h6.8M904.6 649.5h6.8M954.6 649.5h6.8M964.6 649.5h6.8M1014.6 649.5h6.8M1024.6 649.5h6.8M1054.6 649.5h6.8M1064.6 649.5h6.8M1074.6 649.5h6.8M1084.6 649.5h6.8M1134.6 649.5h6.8M1144.6 649.5h6.8M1174.6 649.5h6.8M1184.6 649.5h6.8M1194.6 649.5h6.8M1204.6 649.5h6.8M64.6 669.5h6.8M74.6 669.5h6.8M114.6 669.5h6.8M124.6 669.5h6.8M134.6 669.5h6.8M184.6 669.5h6.8M194.6 669.5h6.8M214.6 669.5h6.8M284.6 669.5h6.8M294.6 669.5h6.8M304.6 669.5h6.8M324.6 669.5h6.8M404.6 669.5h6.8M414.6 669.5h6.8M424.6 669.5h6.8M474.6 669.5h6.8M484.6 669.5h6.8M534.6 669.5h6.8M544.6 669.5h6.8M654.6 669.5h6.8M664.6 669.5h6.8M684.6 669.5h6.8M694.6 669.5h6.8M704.6 669.5h6.8M774.6 669.5h6.8M784.6 669.5h6.8M804.6 669.5h6.8M874.6 669.5h6.8M884.6 669.5h6.8M894.6 669.5h6.8M914.6 669.5h6.8M994.6 669.5h6.8M1004.6 669.5h6.8M1014.6 669.5h6.8M1064.6 669.5h6.8M1074.6 669.5h6.8M1124.6 669.5h6.8M1134.6 669.5h6.8M1194.6 669.5h6.8M64.6 689.5h6.8M74.6 689.5h6.8M94.6 689.5h6.8M104.6 689.5h6.8M184.6 689.5h6.8M194.6 689.5h6.8M214.6 689.5h6.8M284.6 689.5h6.8M294.6 689.5h6.8M304.6 689.5h6.8M324.6 689.5h6.8M404.6 689.5h6.8M414.6 689.5h6.8M424.6 689.5h6.8M474.6 689.5h6.8M484.6 689.5h6.8M534.6 689.5h6.8M544.6 689.5h6.8M604.6 689.5h6.8M654.6 689.5h6.8M664.6 689.5h6.8M684.6 689.5h6.8M694.6 689.5h6.8M774.6 689.5h6.8M784.6 689.5h6.8M804.6 689.5h6.8M874.6 689.5h6.8M884.6 689.5h6.8M894.6 689.5h6.8M914.6 689.5h6.8M994.6 689.5h6.8M1004.6 689.5h6.8M1014.6 689.5h6.8M1064.6 689.5h6.8M1074.6 689.5h6.8M1124.6 689.5h6.8M1134.6 689.5h6.8M1154.6 689.5h6.8M1164.6 689.5h6.8M1174.6 689.5h6.8M1184.6 689.5h6.8M64.6 709.5h6.8M74.6 709.5h6.8M94.6 709.5h6.8M104.6 709.5h6.8M114.6 709.5h6.8M124.6 709.5h6.8M184.6 709.5h6.8M194.6 709.5h6.8M214.6 709.5h6.8M284.6 709.5h6.8M294.6 709.5h6.8M304.6 709.5h6.8M324.6 709.5h6.8M404.6 709.5h6.8M414.6 709.5h6.8M424.6 709.5h6.8M474.6 709.5h6.8M484.6 709.5h6.8M534.6 709.5h6.8M544.6 709.5h6.8M574.6 709.5h6.8M584.6 709.5h6.8M594.6 709.5h6.8M604.6 709.5h6.8M654.6 709.5h6.8M664.6 709.5h6.8M694.6 709.5h6.8M704.6 709.5h6.8M714.6 709.5h6.8M724.6 709.5h6.8M774.6 709.5h6.8M784.6 709.5h6.8M814.6 709.5h6.8M824.6 709.5h6.8M834.6 709.5h6.8M844.6 709.5h6.8M894.6 709.5h6.8M904.6 709.5h6.8M924.6 709.5h6.8M994.6 709.5h6.8M1004.6 709.5h6.8M1014.6 709.5h6.8M1034.6 709.5h6.8M1114.6 709.5h6.8M1124.6 709.5h6.8M1134.6 709.5h6.8M1184.6 709.5h6.8M1194.6 709.5h6.8M64.6 729.5h6.8M74.6 729.5h6.8M104.6 729.5h6.8M114.6 729.5h6.8M124.6 729.5h6.8M134.6 729.5h6.8M184.6 729.5h6.8M194.6 729.5h6.8M224.6 729.5h6.8M234.6 729.5h6.8M244.6 729.5h6.8M254.6 729.5h6.8M304.6 729.5h6.8M314.6 729.5h6.8M344.6 729.5h6.8M354.6 729.5h6.8M364.6 729.5h6.8M374.6 729.5h6.8M424.6 729.5h6.8M434.6 729.5h6.8M454.6 729.5h6.8M524.6 729.5h6.8M534.6 729.5h6.8M544.6 729.5h6.8M564.6 729.5h6.8M644.6 729.5h6.8M654.6 729.5h6.8M664.6 729.5h6.8M714.6 729.5h6.8M724.6 729.5h6.8M774.6 729.5h6.8M784.6 729.5h6.8M814.6 729.5h6.8M824.6 729.5h6.8M834.6 729.5h6.8M844.6 729.5h6.8M894.6 729.5h6.8M904.6 729.5h6.8M924.6 729.5h6.8M934.6 729.5h6.8M944.6 729.5h6.8M954.6 729.5h6.8M964.6 729.5h6.8M1014.6 729.5h6.8M1024.6 729.5h6.8M1044.6 729.5h6.8M1054.6 729.5h6.8M1064.6 729.5h6.8M1134.6 729.5h6.8M1144.6 729.5h6.8M1164.6 729.5h6.8M54.6 749.5h6.8M64.6 749.5h6.8M74.6 749.5h6.8M94.6 749.5h6.8M174.6 749.5h6.8M184.6 749.5h6.8M194.6 749.5h6.8M244.6 749.5h6.8M254.6 749.5h6.8M304.6 749.5h6.8M314.6 749.5h6.8M344.6 749.5h6.8M354.6 749.5h6.8M364.6 749.5h6.8M374.6 749.5h6.8M424.6 749.5h6.8M434.6 749.5h6.8M454.6 749.5h6.8M464.6 749.5h6.8M474.6 749.5h6.8M484.6 749.5h6.8M494.6 749.5h6.8M544.6 749.5h6.8M554.6 749.5h6.8M574.6 749.5h6.8M584.6 749.5h6.8M594.6 749.5h6.8M664.6 749.5h6.8M674.6 749.5h6.8M694.6 749.5h6.8M764.6 749.5h6.8M774.6 749.5h6.8M784.6 749.5h6.8M804.6 749.5h6.8M884.6 749.5h6.8M894.6 749.5h6.8M904.6 749.5h6.8M954.6 749.5h6.8M964.6 749.5h6.8M1014.6 749.5h6.8M1024.6 749.5h6.8M1044.6 749.5h6.8M1054.6 749.5h6.8M1064.6 749.5h6.8M1074.6 749.5h6.8M1134.6 749.5h6.8M1144.6 749.5h6.8M1164.6 749.5h6.8M1174.6 749.5h6.8M64.6 769.5h6.8M74.6 769.5h6.8M94.6 769.5h6.8M164.6 769.5h6.8M174.6 769.5h6.8M184.6 769.5h6.8M204.6 769.5h6.8M284.6 769.5h6.8M294.6 769.5h6.8M304.6 769.5h6.8M354.6 769.5h6.8M364.6 769.5h6.8M414.6 769.5h6.8M424.6 769.5h6.8M444.6 769.5h6.8M454.6 769.5h6.8M464.6 769.5h6.8M474.6 769.5h6.8M534.6 769.5h6.8M544.6 769.5h6.8M564.6 769.5h6.8M574.6 769.5h6.8M584.6 769.5h6.8M654.6 769.5h6.8M664.6 769.5h6.8M684.6 769.5h6.8M754.6 769.5h6.8M764.6 769.5h6.8M774.6 769.5h6.8M794.6 769.5h6.8M874.6 769.5h6.8M884.6 769.5h6.8M894.6 769.5h6.8M944.6 769.5h6.8M954.6 769.5h6.8M1004.6 769.5h6.8M1014.6 769.5h6.8M1074.6 769.5h6.8M1124.6 769.5h6.8M1134.6 769.5h6.8M1154.6 769.5h6.8M64.6 789.5h6.8M74.6 789.5h6.8M94.6 789.5h6.8M164.6 789.5h6.8M174.6 789.5h6.8M184.6 789.5h6.8M204.6 789.5h6.8M284.6 789.5h6.8M294.6 789.5h6.8M304.6 789.5h6.8M354.6 789.5h6.8M364.6 789.5h6.8M414.6 789.5h6.8M424.6 789.5h6.8M454.6 789.5h6.8M464.6 789.5h6.8M474.6 789.5h6.8M484.6 789.5h6.8M534.6 789.5h6.8M544.6 789.5h6.8M564.6 789.5h6.8M574.6 789.5h6.8M584.6 789.5h6.8M594.6 789.5h6.8M604.6 789.5h6.8M654.6 789.5h6.8M664.6 789.5h6.8M684.6 789.5h6.8M774.6 789.5h6.8M784.6 789.5h6.8M804.6 789.5h6.8M874.6 789.5h6.8M884.6 789.5h6.8M894.6 789.5h6.8M914.6 789.5h6.8M994.6 789.5h6.8M1004.6 789.5h6.8M1014.6 789.5h6.8M1064.6 789.5h6.8M1074.6 789.5h6.8M1124.6 789.5h6.8M1134.6 789.5h6.8M1164.6 789.5h6.8M1174.6 789.5h6.8M1184.6 789.5h6.8M1194.6 789.5h6.8M64.6 809.5h6.8M74.6 809.5h6.8M104.6 809.5h6.8M114.6 809.5h6.8M124.6 809.5h6.8M134.6 809.5h6.8M184.6 809.5h6.8M194.6 809.5h6.8M234.6 809.5h6.8M244.6 809.5h6.8M254.6 809.5h6.8M304.6 809.5h6.8M314.6 809.5h6.8M334.6 809.5h6.8M404.6 809.5h6.8M414.6 809.5h6.8M424.6 809.5h6.8M444.6 809.5h6.8M524.6 809.5h6.8M534.6 809.5h6.8M544.6 809.5h6.8M594.6 809.5h6.8M604.6 809.5h6.8M654.6 809.5h6.8M664.6 809.5h6.8M724.6 809.5h6.8M774.6 809.5h6.8M784.6 809.5h6.8M804.6 809.5h6.8M814.6 809.5h6.8M894.6 809.5h6.8M904.6 809.5h6.8M924.6 809.5h6.8M994.6 809.5h6.8M1004.6 809.5h6.8M1014.6 809.5h6.8M1034.6 809.5h6.8M1114.6 809.5h6.8M1124.6 809.5h6.8M1134.6 809.5h6.8M1184.6 809.5h6.8M1194.6 809.5h6.8M64.6 829.5h6.8M74.6 829.5h6.8M104.6 829.5h6.8M114.6 829.5h6.8M124.6 829.5h6.8M134.6 829.5h6.8M184.6 829.5h6.8M194.6 829.5h6.8M214.6 829.5h6.8M224.6 829.5h6.8M234.6 829.5h6.8M244.6 829.5h6.8M254.6 829.5h6.8M304.6 829.5h6.8M314.6 829.5h6.8M334.6 829.5h6.8M344.6 829.5h6.8M354.6 829.5h6.8M364.6 829.5h6.8M374.6 829.5h6.8M424.6 829.5h6.8M434.6 829.5h6.8M454.6 829.5h6.8M524.6 829.5h6.8M534.6 829.5h6.8M544.6 829.5h6.8M564.6 829.5h6.8M644.6 829.5h6.8M654.6 829.5h6.8M664.6 829.5h6.8M714.6 829.5h6.8M724.6 829.5h6.8M774.6 829.5h6.8M784.6 829.5h6.8M814.6 829.5h6.8M824.6 829.5h6.8M834.6 829.5h6.8M844.6 829.5h6.8M894.6 829.5h6.8M904.6 829.5h6.8M924.6 829.5h6.8M934.6 829.5h6.8M944.6 829.5h6.8M954.6 829.5h6.8M964.6 829.5h6.8M1014.6 829.5h6.8M1024.6 829.5h6.8M1134.6 829.5h6.8M1144.6 829.5h6.8M1164.6 829.5h6.8M54.6 849.5h6.8M64.6 849.5h6.8M74.6 849.5h6.8M94.6 849.5h6.8M174.6 849.5h6.8M184.6 849.5h6.8M194.6 849.5h6.8M244.6 849.5h6.8M254.6 849.5h6.8M304.6 849.5h6.8M314.6 849.5h6.8M344.6 849.5h6.8M354.6 849.5h6.8M364.6 849.5h6.8M374.6 849.5h6.8M424.6 849.5h6.8M434.6 849.5h6.8M464.6 849.5h6.8M474.6 849.5h6.8M484.6 849.5h6.8M494.6 849.5h6.8M544.6 849.5h6.8M554.6 849.5h6.8M614.6 849.5h6.8M664.6 849.5h6.8M674.6 849.5h6.8M694.6 849.5h6.8M764.6 849.5h6.8M774.6 849.5h6.8M784.6 849.5h6.8M804.6 849.5h6.8M884.6 849.5h6.8M894.6 849.5h6.8M904.6 849.5h6.8M954.6 849.5h6.8M964.6 849.5h6.8M1014.6 849.5h6.8M1024.6 849.5h6.8M1084.6 849.5h6.8M1134.6 849.5h6.8M1144.6 849.5h6.8M1164.6 849.5h6.8M1174.6 849.5h6.8M64.6 869.5h6.8M74.6 869.5h6.8M94.6 869.5h6.8M164.6 869.5h6.8M174.6 869.5h6.8M184.6 869.5h6.8M204.6 869.5h6.8M284.6 869.5h6.8M294.6 869.5h6.8M304.6 869.5h6.8M354.6 869.5h6.8M364.6 869.5h6.8M414.6 869.5h6.8M424.6 869.5h6.8M454.6 869.5h6.8M464.6 869.5h6.8M474.6 869.5h6.8M484.6 869.5h6.8M534.6 869.5h6.8M544.6 869.5h6.8M574.6 869.5h6.8M584.6 869.5h6.8M594.6 869.5h6.8M604.6 869.5h6.8M654.6 869.5h6.8M664.6 869.5h6.8M724.6 869.5h6.8M774.6 869.5h6.8M784.6 869.5h6.8M804.6 869.5h6.8M874.6 869.5h6.8M884.6 869.5h6.8M894.6 869.5h6.8M914.6 869.5h6.8M994.6 869.5h6.8M1004.6 869.5h6.8M1014.6 869.5h6.8M1064.6 869.5h6.8M1074.6 869.5h6.8M1124.6 869.5h6.8M1134.6 869.5h6.8M1164.6 869.5h6.8M1174.6 869.5h6.8M1184.6 869.5h6.8M1194.6 869.5h6.8M64.6 889.5h6.8M74.6 889.5h6.8M104.6 889.5h6.8M114.6 889.5h6.8M124.6 889.5h6.8M134.6 889.5h6.8M184.6 889.5h6.8M194.6 889.5h6.8M224.6 889.5h6.8M234.6 889.5h6.8M244.6 889.5h6.8M254.6 889.5h6.8M304.6 889.5h6.8M314.6 889.5h6.8M334.6 889.5h6.8M404.6 889.5h6.8M414.6 889.5h6.8M424.6 889.5h6.8M444.6 889.5h6.8M524.6 889.5h6.8M534.6 889.5h6.8M544.6 889.5h6.8M594.6 889.5h6.8M604.6 889.5h6.8M654.6 889.5h6.8M664.6 889.5h6.8M694.6 889.5h6.8M704.6 889.5h6.8M714.6 889.5h6.8M724.6 889.5h6.8M774.6 889.5h6.8M784.6 889.5h6.8M814.6 889.5h6.8M824.6 889.5h6.8M834.6 889.5h6.8M844.6 889.5h6.8M894.6 889.5h6.8M904.6 889.5h6.8M934.6 889.5h6.8M944.6 889.5h6.8M954.6 889.5h6.8M964.6 889.5h6.8M1014.6 889.5h6.8M1024.6 889.5h6.8M1044.6 889.5h6.8M1114.6 889.5h6.8M1124.6 889.5h6.8M1134.6 889.5h6.8M1154.6 889.5h6.8M54.6 909.5h6.8M64.6 909.5h6.8M74.6 909.5h6.8M124.6 909.5h6.8M134.6 909.5h6.8M184.6 909.5h6.8M194.6 909.5h6.8M224.6 909.5h6.8M234.6 909.5h6.8M244.6 909.5h6.8M254.6 909.5h6.8M304.6 909.5h6.8M314.6 909.5h6.8M344.6 909.5h6.8M354.6 909.5h6.8M364.6 909.5h6.8M374.6 909.5h6.8M424.6 909.5h6.8M434.6 909.5h6.8M454.6 909.5h6.8M544.6 909.5h6.8M554.6 909.5h6.8M574.6 909.5h6.8M644.6 909.5h6.8M654.6 909.5h6.8M664.6 909.5h6.8M684.6 909.5h6.8M764.6 909.5h6.8M774.6 909.5h6.8M784.6 909.5h6.8M834.6 909.5h6.8M844.6 909.5h6.8M894.6 909.5h6.8M904.6 909.5h6.8M964.6 909.5h6.8M1014.6 909.5h6.8M1024.6 909.5h6.8M1044.6 909.5h6.8M1054.6 909.5h6.8M1134.6 909.5h6.8M1144.6 909.5h6.8M1164.6 909.5h6.8M54.6 929.5h6.8M64.6 929.5h6.8M74.6 929.5h6.8M94.6 929.5h6.8M174.6 929.5h6.8M184.6 929.5h6.8M194.6 929.5h6.8M244.6 929.5h6.8M254.6 929.5h6.8M304.6 929.5h6.8M314.6 929.5h6.8M344.6 929.5h6.8M354.6 929.5h6.8M364.6 929.5h6.8M374.6 929.5h6.8M424.6 929.5h6.8M434.6 929.5h6.8M464.6 929.5h6.8M474.6 929.5h6.8M484.6 929.5h6.8M494.6 929.5h6.8M544.6 929.5h6.8M554.6 929.5h6.8M594.6 929.5h6.8M604.6 929.5h6.8M614.6 929.5h6.8M664.6 929.5h6.8M674.6 929.5h6.8M694.6 929.5h6.8M764.6 929.5h6.8M774.6 929.5h6.8M784.6 929.5h6.8M804.6 929.5h6.8M884.6 929.5h6.8M894.6 929.5h6.8M904.6 929.5h6.8M954.6 929.5h6.8M964.6 929.5h6.8M1014.6 929.5h6.8M1024.6 929.5h6.8M1084.6 929.5h6.8M1134.6 929.5h6.8M1144.6 929.5h6.8M1164.6 929.5h6.8M1174.6 929.5h6.8" stroke="#007800" stroke-width="1.35" fill="none"/><path d="M309 554h2M319 554h2M329 554h2M379 554h2M399 554h2M439 554h2M449 554h2M459 554h2M479 554h2M489 554h2M499 554h2M549 554h2M559 554h2M569 554h2M579 554h2M599 554h2M609 554h2M619 554h2M679 554h2M689 554h2M699 554h2M719 554h2M729 554h2M789 554h2M799 554h2M809 554h2M819 554h2M879 554h2M919 554h2M929 554h2M939 554h2M1039 554h2M1049 554h2M1059 554h2M1079 554h2M1089 554h2M1099 554h2M1109 554h2M1139 554h2M1149 554h2M116 574h2M126 574h2M136 574h2M156 574h2M166 574h2M176 574h2M186 574h2M236 574h2M246 574h2M256 574h2M316 574h2M356 574h2M366 574h2M376 574h2M466 574h2M476 574h2M486 574h2M496 574h2M516 574h2M526 574h2M536 574h2M546 574h2M556 574h2M576 574h2M586 574h2M596 574h2M646 574h2M656 574h2M676 574h2M686 574h2M736 574h2M746 574h2M816 574h2M826 574h2M836 574h2M856 574h2M866 574h2M876 574h2M886 574h2M926 574h2M936 574h2M946 574h2M956 574h2M976 574h2M986 574h2M996 574h2M1006 574h2M1016 574h2M1056 574h2M1066 574h2M1076 574h2M1126 574h2M1136 574h2M1176 574h2M1186 574h2M1196 574h2M36 594h2M46 594h2M56 594h2M66 594h2M96 594h2M106 594h2M156 594h2M166 594h2M186 594h2M216 594h2M226 594h2M236 594h2M246 594h2M266 594h2M306 594h2M316 594h2M326 594h2M336 594h2M356 594h2M436 594h2M446 594h2M456 594h2M486 594h2M496 594h2M506 594h2M516 594h2M546 594h2M556 594h2M566 594h2M576 594h2M596 594h2M676 594h2M686 594h2M696 594h2M716 594h2M726 594h2M736 594h2M786 594h2M796 594h2M806 594h2M816 594h2M836 594h2M846 594h2M856 594h2M916 594h2M926 594h2M936 594h2M956 594h2M966 594h2M1026 594h2M1036 594h2M1046 594h2M1056 594h2M1116 594h2M1156 594h2M1166 594h2M1176 594h2M56 614h2M66 614h2M76 614h2M96 614h2M106 614h2M116 614h2M126 614h2M156 614h2M166 614h2M216 614h2M226 614h2M276 614h2M286 614h2M416 614h2M426 614h2M436 614h2M456 614h2M466 614h2M476 614h2M536 614h2M546 614h2M556 614h2M576 614h2M586 614h2M646 614h2M656 614h2M666 614h2M676 614h2M696 614h2M706 614h2M716 614h2M756 614h2M766 614h2M776 614h2M826 614h2M836 614h2M856 614h2M866 614h2M916 614h2M926 614h2M976 614h2M986 614h2M1046 614h2M1056 614h2M1066 614h2M1076 614h2M1096 614h2M1106 614h2M1156 614h2M1166 614h2M1176 614h2M36 634h2M46 634h2M56 634h2M96 634h2M156 634h2M166 634h2M176 634h2M276 634h2M286 634h2M296 634h2M336 634h2M346 634h2M356 634h2M366 634h2M396 634h2M406 634h2M416 634h2M466 634h2M476 634h2M486 634h2M506 634h2M516 634h2M576 634h2M586 634h2M596 634h2M606 634h2M626 634h2M636 634h2M686 634h2M696 634h2M706 634h2M746 634h2M756 634h2M766 634h2M806 634h2M866 634h2M876 634h2M886 634h2M926 634h2M986 634h2M996 634h2M1006 634h2M1056 634h2M1066 634h2M1076 634h2M1086 634h2M1106 634h2M1116 634h2M1126 634h2M1176 634h2M1186 634h2M1196 634h2M36 654h2M46 654h2M106 654h2M116 654h2M126 654h2M136 654h2M156 654h2M166 654h2M216 654h2M226 654h2M236 654h2M276 654h2M286 654h2M296 654h2M336 654h2M396 654h2M406 654h2M416 654h2M456 654h2M516 654h2M526 654h2M536 654h2M586 654h2M596 654h2M606 654h2M616 654h2M636 654h2M646 654h2M656 654h2M706 654h2M716 654h2M726 654h2M746 654h2M756 654h2M816 654h2M826 654h2M836 654h2M846 654h2M866 654h2M876 654h2M926 654h2M936 654h2M946 654h2M986 654h2M996 654h2M1006 654h2M1046 654h2M1106 654h2M1116 654h2M1126 654h2M1166 654h2M36 674h2M46 674h2M56 674h2M96 674h2M106 674h2M156 674h2M166 674h2M176 674h2M226 674h2M236 674h2M246 674h2M266 674h2M276 674h2M336 674h2M346 674h2M356 674h2M366 674h2M386 674h2M396 674h2M446 674h2M456 674h2M466 674h2M506 674h2M516 674h2M526 674h2M566 674h2M576 674h2M586 674h2M596 674h2M606 674h2M626 674h2M636 674h2M646 674h2M716 674h2M726 674h2M746 674h2M756 674h2M766 674h2M816 674h2M826 674h2M836 674h2M856 674h2M866 674h2M926 674h2M936 674h2M946 674h2M956 674h2M976 674h2M986 674h2M1036 674h2M1046 674h2M1056 674h2M1096 674h2M1106 674h2M1116 674h2M1156 674h2M1166 674h2M1176 674h2M1186 674h2M36 694h2M46 694h2M56 694h2M116 694h2M126 694h2M136 694h2M156 694h2M166 694h2M176 694h2M226 694h2M236 694h2M246 694h2M266 694h2M276 694h2M336 694h2M346 694h2M356 694h2M366 694h2M386 694h2M396 694h2M446 694h2M456 694h2M466 694h2M506 694h2M516 694h2M526 694h2M566 694h2M576 694h2M586 694h2M596 694h2M626 694h2M636 694h2M646 694h2M706 694h2M716 694h2M726 694h2M746 694h2M756 694h2M766 694h2M816 694h2M826 694h2M836 694h2M856 694h2M866 694h2M926 694h2M936 694h2M946 694h2M956 694h2M976 694h2M986 694h2M1036 694h2M1046 694h2M1056 694h2M1096 694h2M1106 694h2M1116 694h2M1196 694h2M36 714h2M46 714h2M56 714h2M136 714h2M156 714h2M166 714h2M176 714h2M226 714h2M236 714h2M246 714h2M266 714h2M276 714h2M336 714h2M346 714h2M356 714h2M366 714h2M386 714h2M396 714h2M446 714h2M456 714h2M466 714h2M506 714h2M516 714h2M526 714h2M566 714h2M626 714h2M636 714h2M646 714h2M686 714h2M746 714h2M756 714h2M766 714h2M806 714h2M866 714h2M876 714h2M886 714h2M936 714h2M946 714h2M956 714h2M976 714h2M986 714h2M1046 714h2M1056 714h2M1066 714h2M1076 714h2M1096 714h2M1106 714h2M1156 714h2M1166 714h2M1176 714h2M36 734h2M46 734h2M56 734h2M96 734h2M156 734h2M166 734h2M176 734h2M216 734h2M276 734h2M286 734h2M296 734h2M336 734h2M396 734h2M406 734h2M416 734h2M466 734h2M476 734h2M486 734h2M506 734h2M516 734h2M576 734h2M586 734h2M596 734h2M606 734h2M626 734h2M636 734h2M686 734h2M696 734h2M706 734h2M746 734h2M756 734h2M766 734h2M806 734h2M866 734h2M876 734h2M886 734h2M986 734h2M996 734h2M1006 734h2M1076 734h2M1086 734h2M1106 734h2M1116 734h2M1126 734h2M1176 734h2M1186 734h2M1196 734h2M36 754h2M46 754h2M106 754h2M116 754h2M126 754h2M136 754h2M156 754h2M166 754h2M216 754h2M226 754h2M236 754h2M276 754h2M286 754h2M296 754h2M336 754h2M396 754h2M406 754h2M416 754h2M516 754h2M526 754h2M536 754h2M606 754h2M616 754h2M636 754h2M646 754h2M656 754h2M706 754h2M716 754h2M726 754h2M746 754h2M756 754h2M816 754h2M826 754h2M836 754h2M846 754h2M866 754h2M876 754h2M926 754h2M936 754h2M946 754h2M986 754h2M996 754h2M1006 754h2M1086 754h2M1106 754h2M1116 754h2M1126 754h2M1186 754h2M1196 754h2M1206 754h2M36 774h2M46 774h2M56 774h2M106 774h2M116 774h2M126 774h2M146 774h2M156 774h2M216 774h2M226 774h2M236 774h2M246 774h2M266 774h2M276 774h2M326 774h2M336 774h2M346 774h2M386 774h2M396 774h2M406 774h2M486 774h2M506 774h2M516 774h2M526 774h2M596 774h2M606 774h2M626 774h2M636 774h2M646 774h2M696 774h2M706 774h2M716 774h2M736 774h2M746 774h2M806 774h2M816 774h2M826 774h2M836 774h2M856 774h2M866 774h2M916 774h2M926 774h2M936 774h2M976 774h2M986 774h2M996 774h2M1036 774h2M1046 774h2M1056 774h2M1066 774h2M1096 774h2M1106 774h2M1116 774h2M1166 774h2M1176 774h2M1186 774h2M1196 774h2M36 794h2M46 794h2M56 794h2M106 794h2M116 794h2M126 794h2M146 794h2M156 794h2M216 794h2M226 794h2M236 794h2M246 794h2M266 794h2M276 794h2M326 794h2M336 794h2M346 794h2M386 794h2M396 794h2M406 794h2M446 794h2M506 794h2M516 794h2M526 794h2M626 794h2M636 794h2M646 794h2M696 794h2M706 794h2M716 794h2M726 794h2M746 794h2M756 794h2M766 794h2M816 794h2M826 794h2M836 794h2M856 794h2M866 794h2M926 794h2M936 794h2M946 794h2M956 794h2M976 794h2M986 794h2M1036 794h2M1046 794h2M1056 794h2M1096 794h2M1106 794h2M1116 794h2M1156 794h2M36 814h2M46 814h2M56 814h2M96 814h2M156 814h2M166 814h2M176 814h2M216 814h2M226 814h2M276 814h2M286 814h2M296 814h2M346 814h2M356 814h2M366 814h2M386 814h2M396 814h2M456 814h2M466 814h2M476 814h2M486 814h2M506 814h2M516 814h2M566 814h2M576 814h2M586 814h2M626 814h2M636 814h2M646 814h2M686 814h2M696 814h2M706 814h2M716 814h2M746 814h2M756 814h2M766 814h2M826 814h2M836 814h2M846 814h2M866 814h2M876 814h2M886 814h2M936 814h2M946 814h2M956 814h2M976 814h2M986 814h2M1046 814h2M1056 814h2M1066 814h2M1076 814h2M1096 814h2M1106 814h2M1156 814h2M1166 814h2M1176 814h2M36 834h2M46 834h2M56 834h2M96 834h2M156 834h2M166 834h2M176 834h2M276 834h2M286 834h2M296 834h2M396 834h2M406 834h2M416 834h2M466 834h2M476 834h2M486 834h2M506 834h2M516 834h2M576 834h2M586 834h2M596 834h2M606 834h2M626 834h2M636 834h2M686 834h2M696 834h2M706 834h2M746 834h2M756 834h2M766 834h2M806 834h2M866 834h2M876 834h2M886 834h2M986 834h2M996 834h2M1006 834h2M1046 834h2M1056 834h2M1066 834h2M1076 834h2M1086 834h2M1106 834h2M1116 834h2M1126 834h2M1176 834h2M1186 834h2M1196 834h2M36 854h2M46 854h2M106 854h2M116 854h2M126 854h2M136 854h2M156 854h2M166 854h2M216 854h2M226 854h2M236 854h2M276 854h2M286 854h2M296 854h2M336 854h2M396 854h2M406 854h2M416 854h2M456 854h2M516 854h2M526 854h2M536 854h2M576 854h2M586 854h2M596 854h2M606 854h2M636 854h2M646 854h2M656 854h2M706 854h2M716 854h2M726 854h2M746 854h2M756 854h2M816 854h2M826 854h2M836 854h2M846 854h2M866 854h2M876 854h2M926 854h2M936 854h2M946 854h2M986 854h2M996 854h2M1006 854h2M1046 854h2M1056 854h2M1066 854h2M1076 854h2M1106 854h2M1116 854h2M1126 854h2M1186 854h2M1196 854h2M1206 854h2M36 874h2M46 874h2M56 874h2M106 874h2M116 874h2M126 874h2M146 874h2M156 874h2M216 874h2M226 874h2M236 874h2M246 874h2M266 874h2M276 874h2M326 874h2M336 874h2M346 874h2M386 874h2M396 874h2M406 874h2M446 874h2M506 874h2M516 874h2M526 874h2M566 874h2M626 874h2M636 874h2M646 874h2M686 874h2M696 874h2M706 874h2M716 874h2M746 874h2M756 874h2M766 874h2M816 874h2M826 874h2M836 874h2M856 874h2M866 874h2M926 874h2M936 874h2M946 874h2M956 874h2M976 874h2M986 874h2M1036 874h2M1046 874h2M1056 874h2M1096 874h2M1106 874h2M1116 874h2M1156 874h2M36 894h2M46 894h2M56 894h2M96 894h2M156 894h2M166 894h2M176 894h2M216 894h2M276 894h2M286 894h2M296 894h2M346 894h2M356 894h2M366 894h2M386 894h2M396 894h2M456 894h2M466 894h2M476 894h2M486 894h2M506 894h2M516 894h2M566 894h2M576 894h2M586 894h2M626 894h2M636 894h2M646 894h2M686 894h2M746 894h2M756 894h2M766 894h2M806 894h2M866 894h2M876 894h2M886 894h2M926 894h2M986 894h2M996 894h2M1006 894h2M1056 894h2M1066 894h2M1076 894h2M1096 894h2M1106 894h2M1166 894h2M1176 894h2M1186 894h2M1196 894h2M36 914h2M46 914h2M96 914h2M106 914h2M116 914h2M156 914h2M166 914h2M176 914h2M216 914h2M276 914h2M286 914h2M296 914h2M336 914h2M396 914h2M406 914h2M416 914h2M466 914h2M476 914h2M486 914h2M496 914h2M516 914h2M526 914h2M536 914h2M586 914h2M596 914h2M606 914h2M626 914h2M636 914h2M696 914h2M706 914h2M716 914h2M726 914h2M746 914h2M756 914h2M806 914h2M816 914h2M826 914h2M866 914h2M876 914h2M886 914h2M926 914h2M936 914h2M946 914h2M956 914h2M986 914h2M996 914h2M1006 914h2M1066 914h2M1076 914h2M1086 914h2M1106 914h2M1116 914h2M1126 914h2M1176 914h2M1186 914h2M1196 914h2M36 934h2M46 934h2M106 934h2M116 934h2M126 934h2M136 934h2M156 934h2M166 934h2M216 934h2M226 934h2M236 934h2M276 934h2M286 934h2M296 934h2M336 934h2M396 934h2M406 934h2M416 934h2M456 934h2M516 934h2M526 934h2M536 934h2M576 934h2M586 934h2M636 934h2M646 934h2M656 934h2M706 934h2M716 934h2M726 934h2M746 934h2M756 934h2M816 934h2M826 934h2M836 934h2M846 934h2M866 934h2M876 934h2M926 934h2M936 934h2M946 934h2M986 934h2M996 934h2M1006 934h2M1046 934h2M1056 934h2M1066 934h2M1076 934h2M1106 934h2M1116 934h2M1126 934h2M1186 934h2M1196 934h2M1206 934h2" stroke="#007000" stroke-width="2" fill="none"/></svg>
</div>
<div id="vs">
 <svg class="abs" style="left:4px;top:7px" width="12" height="8"><defs><linearGradient id="ga1" x1="0" y1="0" x2="0" y2="1"><stop offset="0" stop-color="#101010"/><stop offset="1" stop-color="#8a8a8a"/></linearGradient></defs><path d="M5.5 1 L10 6 L1 6 Z" fill="url(#ga1)"/></svg>
 <div class="abs" style="left:0px;top:22px;width:19px;height:355px;border:1px solid #9a9a9a;border-radius:2px;background:linear-gradient(90deg,#f4f4f4 0,#e8e8e8 6px,#d6d6d8 6px,#cfd0d4 100%);"></div>
 <div class="abs" style="left:5px;top:194px;width:9px;height:1px;background:#404040;box-shadow:0 4px 0 #404040,0 8px 0 #404040;"></div>
 <svg class="abs" style="left:4px;top:932px" width="12" height="8"><defs><linearGradient id="ga2" x1="0" y1="0" x2="0" y2="1"><stop offset="0" stop-color="#8a8a8a"/><stop offset="1" stop-color="#101010"/></linearGradient></defs><path d="M1 1 L10 1 L5.5 6 Z" fill="url(#ga2)"/></svg>
</div>

<div id="status"></div>
<div class="abs" style="left:9px;top:1034px;width:1288px;height:1px;background:#fff"></div>
<div class="abs" style="left:9px;top:1060px;width:1288px;height:1px;background:#fff"></div>
<div class="abs" style="left:9px;top:1034px;width:1px;height:27px;background:#fff"></div>
<div class="abs" style="left:1296px;top:1034px;width:1px;height:27px;background:#fff"></div>
<svg class="abs" style="left:1284px;top:1047px" width="12" height="13" viewBox="0 0 12 13">
<g fill="#fff"><rect x="10" y="2" width="2" height="2"/><rect x="6" y="6" width="2" height="2"/><rect x="10" y="6" width="2" height="2"/><rect x="2" y="10" width="2" height="2"/><rect x="6" y="10" width="2" height="2"/><rect x="10" y="10" width="2" height="2"/></g>
<g fill="#8c8c8c"><rect x="9" y="1" width="2" height="2"/><rect x="5" y="5" width="2" height="2"/><rect x="9" y="5" width="2" height="2"/><rect x="1" y="9" width="2" height="2"/><rect x="5" y="9" width="2" height="2"/><rect x="9" y="9" width="2" height="2"/></g>
</svg>
<div class="st" style="left:11px">Ln</div>
<div class="st" style="left:30px">1</div>
<div class="st" style="left:41px">:</div>
<div class="st" style="left:49px">56</div>
<div class="st" style="left:77px">Col</div>
<div class="st" style="left:103px">1</div>
<div class="st" style="left:123px">Sel</div>
<div class="st" style="left:146px">0</div>
<div class="ss" style="left:404px"></div>
<div class="st" style="left:409px">8.47 KB</div>
<div class="ss" style="left:514px"></div>
<div class="st" style="left:518px">ANSI</div>
<div class="ss" style="left:637px"></div>
<div class="st" style="left:640px">CR+LF</div>
<div class="ss" style="left:687px"></div>
<div class="st" style="left:691px">INS</div>
<div class="ss" style="left:725px"></div>
<div class="st" style="left:730px">Web Source Code</div>
</body></html>
